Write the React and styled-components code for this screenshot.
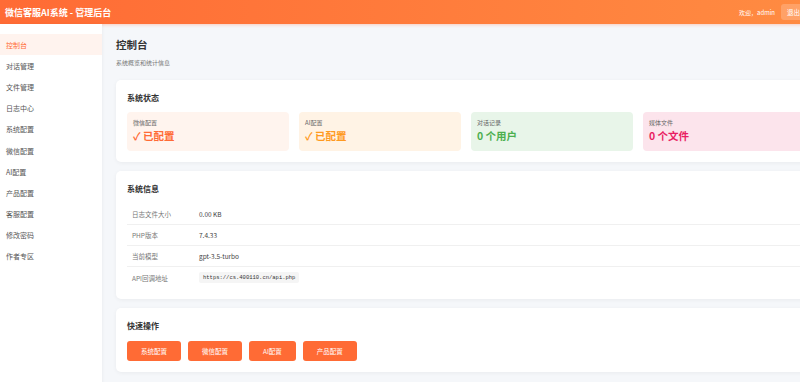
import React from 'react';
import styled, { createGlobalStyle } from 'styled-components';

const GlobalStyle = createGlobalStyle`
  html, body {
    margin: 0;
    padding: 0;
    overflow: hidden;
    background: #f5f7fa;
  }
  body {
    font-family: "Noto Sans CJK SC", "Noto Sans", "Liberation Sans", sans-serif;
    color: #333;
  }
  * { box-sizing: border-box; }
`;

const Page = styled.div`
  width: 830px;
  min-height: 382px;
  display: flex;
  flex-direction: column;
`;

const Header = styled.header`
  height: 24px;
  display: flex;
  align-items: center;
  justify-content: space-between;
  padding: 0 24px 0 5px;
  background: linear-gradient(90deg, #ff6b35 0%, #ff8c42 100%);
  box-shadow: 0 1px 3px rgba(255, 107, 53, 0.3);
  color: #fff;
`;

const Brand = styled.h1`
  margin: 0;
  font-size: 9px;
  font-weight: 700;
`;

const UserBox = styled.div`
  display: flex;
  align-items: center;
  gap: 6px;
  font-size: 6px;
`;

const Logout = styled.button`
  border: none;
  border-radius: 3px;
  padding: 3px 6px;
  font-family: inherit;
  font-size: 6.5px;
  color: #fff;
  background: rgba(255, 255, 255, 0.2);
`;

const Body = styled.div`
  flex: 1;
  display: flex;
`;

const Sidebar = styled.nav`
  width: 102px;
  flex-shrink: 0;
  padding-top: 10px;
  background: #fff;
  box-shadow: 1px 0 3px rgba(0, 0, 0, 0.04);
`;

const NavItem = styled.div`
  height: 21.2px;
  display: flex;
  align-items: center;
  padding-left: 6px;
  font-size: 7px;
  color: ${p => (p.$active ? '#ff6b35' : '#555')};
  background: ${p => (p.$active ? '#fff3ee' : 'transparent')};
`;

const Main = styled.main`
  flex: 1;
  padding: 14px;
`;

const Title = styled.h2`
  margin: 0;
  font-size: 10.5px;
  line-height: 14px;
  font-weight: 700;
  color: #333;
`;

const Subtitle = styled.p`
  margin: 6px 0 13px;
  font-size: 6px;
  line-height: 9px;
  color: #777;
`;

const Card = styled.section`
  background: #fff;
  border-radius: 5px;
  padding: 11px;
  margin-bottom: 9px;
  box-shadow: 0 1px 4px rgba(0, 0, 0, 0.05);
`;

const CardTitle = styled.h3`
  margin: 0 0 ${p => p.$gap || 7}px;
  font-size: 8px;
  line-height: 14px;
  font-weight: 700;
  color: #333;
`;

const StatGrid = styled.div`
  display: grid;
  grid-template-columns: repeat(4, 1fr);
  gap: 10px;
`;

const StatBox = styled.div`
  height: 39px;
  padding: 6px 6px 8px;
  border-radius: 4px;
  background: ${p => p.$bg};
`;

const StatLabel = styled.div`
  font-size: 6px;
  line-height: 9px;
  color: #666;
`;

const StatValue = styled.div`
  margin-top: 2px;
  font-size: 10.5px;
  line-height: 14px;
  font-weight: 700;
  color: ${p => p.$color};
`;

const InfoTable = styled.div`
  display: flex;
  flex-direction: column;
`;

const InfoRow = styled.div`
  height: 21px;
  display: grid;
  grid-template-columns: 67px 1fr;
  align-items: center;
  padding-left: 5px;
  border-bottom: ${p => (p.$last ? 'none' : '1px solid #f0f0f0')};
  font-size: 6.5px;
`;

const InfoLabel = styled.span`
  color: #777;
`;

const InfoValue = styled.span`
  color: #444;
`;

const Code = styled.code`
  justify-self: start;
  padding: 2px 4px;
  border-radius: 2px;
  background: #f5f5f5;
  font-family: "Liberation Mono", "DejaVu Sans Mono", monospace;
  font-size: 5.5px;
  color: #333;
`;

const ButtonRow = styled.div`
  display: flex;
  gap: 7px;
`;

const ActionButton = styled.button`
  height: 20px;
  padding: 0 14px;
  border: none;
  border-radius: 3px;
  background: #ff6b35;
  color: #fff;
  font-family: inherit;
  font-size: 6.5px;
`;

const navItems = [
  '控制台',
  '对话管理',
  '文件管理',
  '日志中心',
  '系统配置',
  '微信配置',
  'AI配置',
  '产品配置',
  '客服配置',
  '修改密码',
  '作者专区',
];

const stats = [
  { label: '微信配置', value: '✓ 已配置', bg: '#fff4ee', color: '#ff6b35' },
  { label: 'AI配置', value: '✓ 已配置', bg: '#fff3e5', color: '#ff9a1f' },
  { label: '对话记录', value: '0 个用户', bg: '#e8f5e9', color: '#4caf50' },
  { label: '媒体文件', value: '0 个文件', bg: '#fce4ec', color: '#e91e63' },
];

const info = [
  { label: '日志文件大小', value: '0.00 KB' },
  { label: 'PHP版本', value: '7.4.33' },
  { label: '当前模型', value: 'gpt-3.5-turbo' },
  { label: 'API回调地址', value: 'https://cs.400110.cn/api.php', code: true },
];

const actions = ['系统配置', '微信配置', 'AI配置', '产品配置'];

export default function App() {
  return (
    <Page>
      <GlobalStyle />
      <Header>
        <Brand>微信客服AI系统 - 管理后台</Brand>
        <UserBox>
          <span>欢迎，admin</span>
          <Logout>退出</Logout>
        </UserBox>
      </Header>
      <Body>
        <Sidebar>
          {navItems.map((item, i) => (
            <NavItem key={item} $active={i === 0}>
              {item}
            </NavItem>
          ))}
        </Sidebar>
        <Main>
          <Title>控制台</Title>
          <Subtitle>系统概览和统计信息</Subtitle>

          <Card>
            <CardTitle>系统状态</CardTitle>
            <StatGrid>
              {stats.map(s => (
                <StatBox key={s.label} $bg={s.bg}>
                  <StatLabel>{s.label}</StatLabel>
                  <StatValue $color={s.color}>{s.value}</StatValue>
                </StatBox>
              ))}
            </StatGrid>
          </Card>

          <Card>
            <CardTitle $gap={8}>系统信息</CardTitle>
            <InfoTable>
              {info.map((row, i) => (
                <InfoRow key={row.label} $last={i === info.length - 1}>
                  <InfoLabel>{row.label}</InfoLabel>
                  {row.code ? <Code>{row.value}</Code> : <InfoValue>{row.value}</InfoValue>}
                </InfoRow>
              ))}
            </InfoTable>
          </Card>

          <Card>
            <CardTitle $gap={8}>快速操作</CardTitle>
            <ButtonRow>
              {actions.map(a => (
                <ActionButton key={a}>{a}</ActionButton>
              ))}
            </ButtonRow>
          </Card>
        </Main>
      </Body>
    </Page>
  );
}
